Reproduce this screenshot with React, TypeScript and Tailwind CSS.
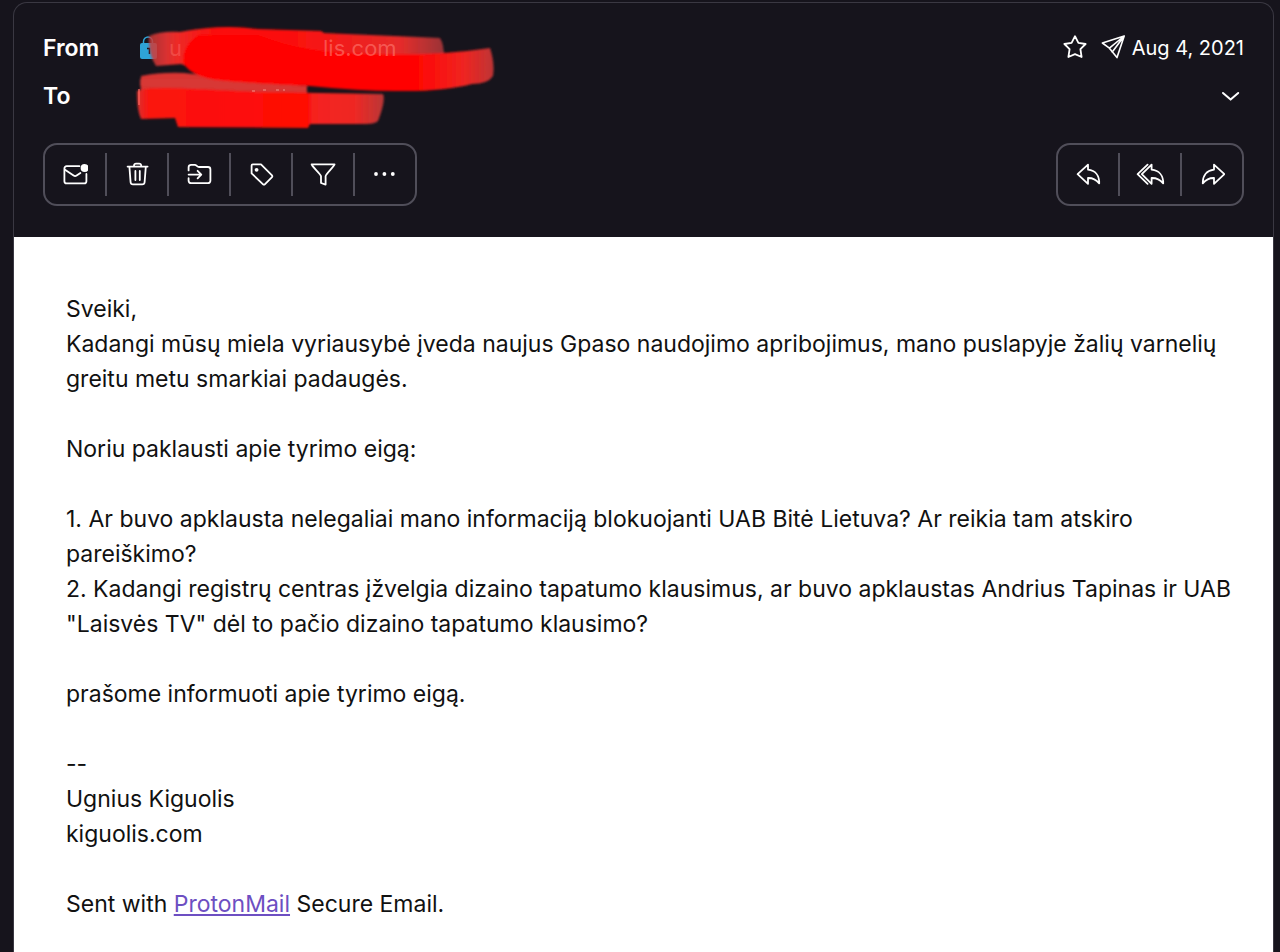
import type { ReactNode } from 'react';

function Icon({ children, size = 26 }: { children: ReactNode; size?: number }) {
  return (
    <svg
      width={size}
      height={size}
      viewBox="0 0 26 26"
      fill="none"
      stroke="currentColor"
      strokeWidth="1.8"
      strokeLinecap="round"
      strokeLinejoin="round"
      aria-hidden="true"
    >
      {children}
    </svg>
  );
}

const replyShape = 'M13 2.600 2.600 12.200 13 21.800v-5.800c4.800-.2 8 1.600 11.200 5.400.2-7.600-3.600-13-11.200-13.800z';

const messageActions = [
  {
    label: 'Mark as unread',
    icon: (
      <Icon>
        <path d="M17.400 4.200H4.600a2.200 2.200 0 0 0-2.200 2.200v12.800a2.200 2.200 0 0 0 2.200 2.200h17.600a2.200 2.200 0 0 0 2.200-2.200V12" />
        <path d="m3 7.800 8.600 5.800a2.600 2.600 0 0 0 3 0l3.800-2.600" />
        <circle cx="22.600" cy="6" r="4" fill="currentColor" stroke="none" />
      </Icon>
    ),
  },
  {
    label: 'Move to trash',
    icon: (
      <Icon>
        <path d="M3.600 4.600h20M10 4.400v-.8a2 2 0 0 1 2-2h3.200a2 2 0 0 1 2 2v.8M5.400 4.800l1.200 15.400a2.400 2.400 0 0 0 2.400 2.200h9.200a2.400 2.400 0 0 0 2.400-2.200l1.200-15.400M11.400 9v9M15.800 9v9" />
      </Icon>
    ),
  },
  {
    label: 'Move to folder',
    icon: (
      <Icon>
        <path d="M2.600 8.400V5.200A2.400 2.400 0 0 1 5 2.800h3.800c1.800 0 2.200 2.200 4.200 2.200h9a2.400 2.400 0 0 1 2.400 2.400v11.400a2.400 2.400 0 0 1-2.400 2.400H5a2.400 2.400 0 0 1-2.400-2.400v-2.600" />
        <path d="M2.600 12.600h12.400M11.600 8.800l3.700 3.800-3.700 3.800" />
      </Icon>
    ),
  },
  {
    label: 'Label as',
    icon: (
      <Icon>
        <path d="M3.600 3.600a1.200 1.200 0 0 1 1.200-1.200h8.200l11 11a1.200 1.200 0 0 1 0 1.700l-7.200 7.200a1.200 1.200 0 0 1-1.700 0L3.600 11.400z" />
        <circle cx="8.600" cy="7.800" r="1.900" fill="currentColor" stroke="none" />
      </Icon>
    ),
  },
  {
    label: 'Filter',
    icon: (
      <Icon>
        <path d="M1.600 2.400h23c-.3 1.800-9 10-9 11.800v8.400l-4.600-1.600v-6.800C11 12.400 1.800 4.200 1.600 2.400z" />
      </Icon>
    ),
  },
  {
    label: 'More',
    icon: (
      <Icon>
        <g fill="currentColor" stroke="none">
          <circle cx="4" cy="12" r="1.900" />
          <circle cx="12.400" cy="12" r="1.900" />
          <circle cx="20.800" cy="12" r="1.900" />
        </g>
      </Icon>
    ),
  },
];

const replyActions = [
  {
    label: 'Reply',
    icon: (
      <Icon>
        <path d={replyShape} />
      </Icon>
    ),
  },
  {
    label: 'Reply all',
    icon: (
      <svg
        width="30"
        height="26"
        viewBox="0 0 30 26"
        fill="none"
        stroke="currentColor"
        strokeWidth="1.8"
        strokeLinecap="round"
        strokeLinejoin="round"
        aria-hidden="true"
      >
        <path d="M12.600 2.600 2.600 12.200l10 9.600" />
        <path d="M16.600 2.600 6.800 12.200l9.800 9.600v-5.800c4.800-.2 8.400 1.600 11.600 5.400.2-7.600-4-13-11.600-13.800z" />
      </svg>
    ),
  },
  {
    label: 'Forward',
    icon: (
      <Icon>
        <g transform="matrix(-1 0 0 1 28 0)">
          <path d={replyShape} />
        </g>
      </Icon>
    ),
  },
];

function Toolbar({ label, actions }: { label: string; actions: { label: string; icon: ReactNode }[] }) {
  return (
    <div
      role="group"
      aria-label={label}
      className="flex items-center divide-x-2 divide-[#504e59] rounded-[14px] border-2 border-[#504e59] py-2"
    >
      {actions.map((action) => (
        <button
          key={action.label}
          type="button"
          aria-label={action.label}
          className="flex h-[43px] w-[62px] items-center justify-center last:w-[60px]"
        >
          {action.icon}
        </button>
      ))}
    </div>
  );
}

function Redaction() {
  return (
    <svg
      className="pointer-events-none absolute -top-2 -left-2"
      width="370"
      height="120"
      viewBox="131 15 370 120"
      aria-hidden="true"
    >
      <defs>
        <filter id="soften" x="-5%" y="-10%" width="110%" height="120%">
          <feGaussianBlur stdDeviation="0.9" />
        </filter>
        <linearGradient id="upper" gradientUnits="userSpaceOnUse" x1="148" y1="0" x2="445" y2="0">
          <stop offset="0" stopColor="#c83a3a" stopOpacity="0.8" />
          <stop offset="0.06" stopColor="#e23432" stopOpacity="0.95" />
          <stop offset="0.1" stopColor="#ee2a27" />
          <stop offset="0.25" stopColor="#fc0a08" />
          <stop offset="0.5" stopColor="#fa110f" />
          <stop offset="0.85" stopColor="#e52c2a" />
          <stop offset="1" stopColor="#983438" />
        </linearGradient>
        <linearGradient id="sweep" gradientUnits="userSpaceOnUse" x1="182" y1="0" x2="494" y2="0">
          <stop offset="0" stopColor="#ff0502" />
          <stop offset="0.75" stopColor="#ff0502" />
          <stop offset="0.9" stopColor="#f02421" />
          <stop offset="1" stopColor="#bd3535" />
        </linearGradient>
        <linearGradient id="lower" gradientUnits="userSpaceOnUse" x1="136" y1="0" x2="384" y2="0">
          <stop offset="0" stopColor="#d63533" />
          <stop offset="0.05" stopColor="#fb1510" />
          <stop offset="0.69" stopColor="#ff0703" />
          <stop offset="0.71" stopColor="#f5221f" />
          <stop offset="0.88" stopColor="#ef2824" />
          <stop offset="1" stopColor="#b93737" />
        </linearGradient>
      </defs>
      <g filter="url(#soften)">
        <path d="M141 75q20-4 43-3l54 6 69 7v20l-167 5z" fill="#d73533" />
        <path d="M149 35q12-5 31-4 42-8 77-3l64 2 3 2 116 5q4 6 4 20l-70 8-188 0-5-2-25 2q-8-12-7-30z" fill="url(#upper)" />
        <path d="M183 61q0-18 16-27l60 0q50 20 120 19 58 2 111-6 5 15 3 28-5 8-21 8-30 8-76 7-37 0-86-5l-76-4q-44-3-51-20z" fill="url(#sweep)" />
        <path d="M137 90q10-5 60-2l60 3 126 2q3 6-5 27-3 3-12 3l-56 0-2 4-130-1-3-9-34 1q-4-8-4-28z" fill="url(#lower)" />
        <path d="M140 78l66 0 100 9-2 3-164-5z" fill="#d83b38" opacity="0.75" />
      </g>
      <path d="M139 88v16" stroke="#ff6a62" strokeWidth="1.500" opacity="0.8" />
      <path d="M252 90h3m8-1h3m10 0h3m5-1v2" stroke="#f79a92" strokeWidth="1.500" opacity="0.6" />
    </svg>
  );
}

export default function App() {
  return (
    <div className="flex min-h-screen flex-col bg-[#16141c] pt-0.5 pr-1.5 pl-[13px] font-['Inter','Liberation_Sans',sans-serif]">
      <article className="flex grow flex-col rounded-t-[14px] border border-b-0 border-[#3a3842]">
        <header className="px-[29px] pt-[21px] pb-[31px] text-white">
          <div className="flex h-12 items-center">
            <span className="w-24 text-[23px] font-semibold">From</span>
            <div className="relative flex h-12 grow items-center">
              <svg width="18" height="26" viewBox="0 0 18 26" aria-hidden="true">
                <path d="M4.500 9V6.500a4.500 4.500 0 0 1 9 0V9" fill="none" stroke="#2ea3d6" strokeWidth="1.500" />
                <rect x="1" y="8" width="17" height="16" rx="2" fill="#2ea3d6" />
                <path d="M8 13.500h2.500V19" fill="none" stroke="#16141c" strokeWidth="1.500" />
              </svg>
              <Redaction />
              <span className="relative ml-3 w-[154px] text-[22px] text-[#ff7a72]/40">u</span>
              <span className="relative text-[22px] text-[#ff7a72]/60">lis.com</span>
            </div>
            <button type="button" aria-label="Star message" className="mr-3 flex">
              <Icon>
                <path d="m13 1.200 3.400 6.600 7.200 1.200-5.200 5.200 1.200 7.800L13 19.200l-6.600 2.800 1.200-7.800L2.400 9l7.200-1.200z" />
              </Icon>
            </button>
            <Icon>
              <path d="M24.200 1 2.400 8l7 5.200 7.600 9.400zM24.200 1 9.400 13.200M24.200 1l-11 14.800-1.200 1" strokeWidth="1.600" />
            </Icon>
            <time dateTime="2021-08-04" className="ml-1.5 text-[20px]">
              Aug 4, 2021
            </time>
          </div>
          <div className="flex h-12 items-center justify-between">
            <span className="text-[23px] font-semibold">To</span>
            <button type="button" aria-label="Show details" className="flex">
              <Icon>
                <path d="m5 10 7.600 6.600 7.600-6.600" strokeWidth="2" />
              </Icon>
            </button>
          </div>
          <div className="mt-[23px] flex items-center justify-between">
            <Toolbar label="Message actions" actions={messageActions} />
            <Toolbar label="Reply actions" actions={replyActions} />
          </div>
        </header>
        <div className="grow bg-white pt-[55px] pr-9 pl-[52px] text-[23px] leading-[35px] text-[#111111]">
          <p>Sveiki,</p>
          <p>
            Kadangi mūsų miela vyriausybė įveda naujus Gpaso naudojimo apribojimus, mano puslapyje žalių varnelių
            greitu metu smarkiai padaugės.
          </p>
          <p className="mt-[35px]">Noriu paklausti apie tyrimo eigą:</p>
          <p className="mt-[35px]">
            1. Ar buvo apklausta nelegaliai mano informaciją blokuojanti UAB Bitė Lietuva? Ar reikia tam atskiro
            pareiškimo?
          </p>
          <p>
            2. Kadangi registrų centras įžvelgia dizaino tapatumo klausimus, ar buvo apklaustas Andrius Tapinas ir UAB
            "Laisvės TV" dėl to pačio dizaino tapatumo klausimo?
          </p>
          <p className="mt-[35px]">prašome informuoti apie tyrimo eigą.</p>
          <p className="mt-[35px]">--</p>
          <p>Ugnius Kiguolis</p>
          <p>kiguolis.com</p>
          <p className="mt-[35px]">
            Sent with{' '}
            <a href="#protonmail" className="text-[#6d4fc2] underline decoration-2 underline-offset-2">
              ProtonMail
            </a>{' '}
            Secure Email.
          </p>
        </div>
      </article>
    </div>
  );
}
